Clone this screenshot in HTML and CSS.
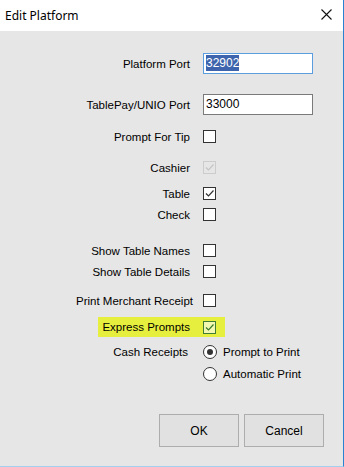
FILE: index.html
```html
<!DOCTYPE html>
<html lang="en">
<head>
    <meta charset="UTF-8">
    <meta name="viewport" content="width=device-width, initial-scale=1.0">
    <title>Edit Platform</title>
    <link rel="stylesheet" href="styles.css">
</head>
<body>
    <div class="dialog">
        <div class="titlebar">
            <span class="title">Edit Platform</span>
            <svg class="close" width="11" height="11" viewBox="0 0 11 11">
                <path d="M0.5 0.5 L10.5 10.5 M10.5 0.5 L0.5 10.5" stroke="#111" stroke-width="1.1" fill="none"/>
            </svg>
        </div>

        <div class="content">
            <div class="row first">
                <label>Platform Port</label>
                <div class="textbox focus"><span class="selected">32902</span></div>
            </div>
            <div class="row gap20">
                <label>TablePay/UNIO Port</label>
                <div class="textbox">33000</div>
            </div>
            <div class="row gap11">
                <label>Prompt For Tip</label>
                <span class="check"></span>
            </div>
            <div class="row gap10">
                <label>Cashier</label>
                <span class="check checked disabled">
                    <svg viewBox="0 0 11 11"><path d="M2 5.5 L4.5 8 L9.5 2.5" /></svg>
                </span>
            </div>
            <div class="row gap5">
                <label>Table</label>
                <span class="check checked">
                    <svg viewBox="0 0 11 11"><path d="M2 5.5 L4.5 8 L9.5 2.5" /></svg>
                </span>
            </div>
            <div class="row">
                <label>Check</label>
                <span class="check"></span>
            </div>
            <div class="row gap15">
                <label>Show Table Names</label>
                <span class="check"></span>
            </div>
            <div class="row">
                <label>Show Table Details</label>
                <span class="check"></span>
            </div>
            <div class="row gap8">
                <label class="wide">Print Merchant Receipt</label>
                <span class="check"></span>
            </div>
            <div class="row gap6 highlight">
                <label>Express Prompts</label>
                <span class="check checked marked">
                    <svg viewBox="0 0 11 11"><path d="M2 5.5 L4.5 8 L9.5 2.5" /></svg>
                </span>
            </div>
            <div class="row gap4">
                <label class="narrow">Cash Receipts</label>
                <span class="option"><span class="radio on"></span>Prompt to Print</span>
            </div>
            <div class="row gap1">
                <label></label>
                <span class="option"><span class="radio"></span>Automatic Print</span>
            </div>
        </div>

        <div class="buttons">
            <button>OK</button>
            <button>Cancel</button>
        </div>
    </div>
</body>
</html>
```

FILE: styles.css
```css
body {
    margin: 0;
    font-family: "Liberation Sans", Arial, sans-serif;
    font-size: 11.5px;
    color: #000;
}
.dialog {
    width: 343px;
    height: 466px;
    background-color: #e6e6e6;
    border-right: 1px solid #2a83d1;
    border-bottom: 1px solid #a3d0ee;
    display: flex;
    flex-direction: column;
}
.titlebar {
    height: 31px;
    background-color: #fff;
    display: flex;
    align-items: center;
    justify-content: space-between;
    padding: 0 11px 0 5px;
}
.title {
    font-family: "Noto Sans", sans-serif;
    font-size: 12px;
    color: #000;
    margin-top: -1px;
}
.close {
    display: block;
    margin-top: -2px;
}
.content {
    display: flex;
    flex-direction: column;
}
.row {
    display: grid;
    grid-template-columns: 190px 1fr;
    column-gap: 13px;
    align-items: center;
    height: 21px;
}
.row label {
    text-align: right;
    white-space: nowrap;
}
.row label.wide {
    margin-right: -3px;
}
.row label.narrow {
    margin-right: 2px;
}
.first { margin-top: 22px; }
.gap20 { margin-top: 20px; }
.gap15 { margin-top: 15px; }
.gap11 { margin-top: 11px; }
.gap10 { margin-top: 10px; }
.gap8 { margin-top: 8px; }
.gap6 { margin-top: 6px; }
.gap5 { margin-top: 5px; }
.gap4 { margin-top: 4px; }
.gap1 { margin-top: 1px; }

.highlight {
    width: 127px;
    height: 20px;
    margin-left: 98px;
    grid-template-columns: 92px 1fr;
    background-color: #e7ef3e;
}

.textbox {
    width: 106px;
    height: 19px;
    background-color: #fff;
    border: 1px solid #7a7a7a;
    padding-left: 2px;
    line-height: 19px;
    font-size: 12px;
    box-sizing: content-box;
}
.textbox.focus {
    border-color: #5a9ee0;
}
.selected {
    background-color: #3d64ac;
    color: #fff;
    padding: 1px 0;
}

.check {
    width: 11px;
    height: 11px;
    border: 1px solid #333;
    background-color: #fff;
    display: block;
}
.check svg {
    display: block;
    width: 11px;
    height: 11px;
}
.check svg path {
    fill: none;
    stroke: #333;
    stroke-width: 1.2;
}
.check.disabled {
    border-color: #cccccc;
    background-color: #e6e6e6;
}
.check.disabled svg path {
    stroke: #c4c4c4;
}
.check.marked {
    border-color: #3f7d35;
    background-color: #f3f8b0;
}
.check.marked svg path {
    stroke: #3a7a2c;
}

.option {
    display: flex;
    align-items: center;
}
.radio {
    width: 12px;
    height: 12px;
    border: 1px solid #333;
    border-radius: 50%;
    background-color: #fff;
    margin-right: 6px;
    position: relative;
}
.radio.on::after {
    content: "";
    position: absolute;
    left: 3px;
    top: 3px;
    width: 6px;
    height: 6px;
    border-radius: 50%;
    background-color: #333;
}

.buttons {
    display: flex;
    justify-content: flex-end;
    gap: 5px;
    padding-right: 19px;
    margin-top: 30px;
}
button {
    width: 80px;
    height: 33px;
    background-color: #e1e1e1;
    border: 1px solid #adadad;
    font-family: "Liberation Sans", Arial, sans-serif;
    font-size: 12px;
    color: #000;
    padding: 0;
}
```
